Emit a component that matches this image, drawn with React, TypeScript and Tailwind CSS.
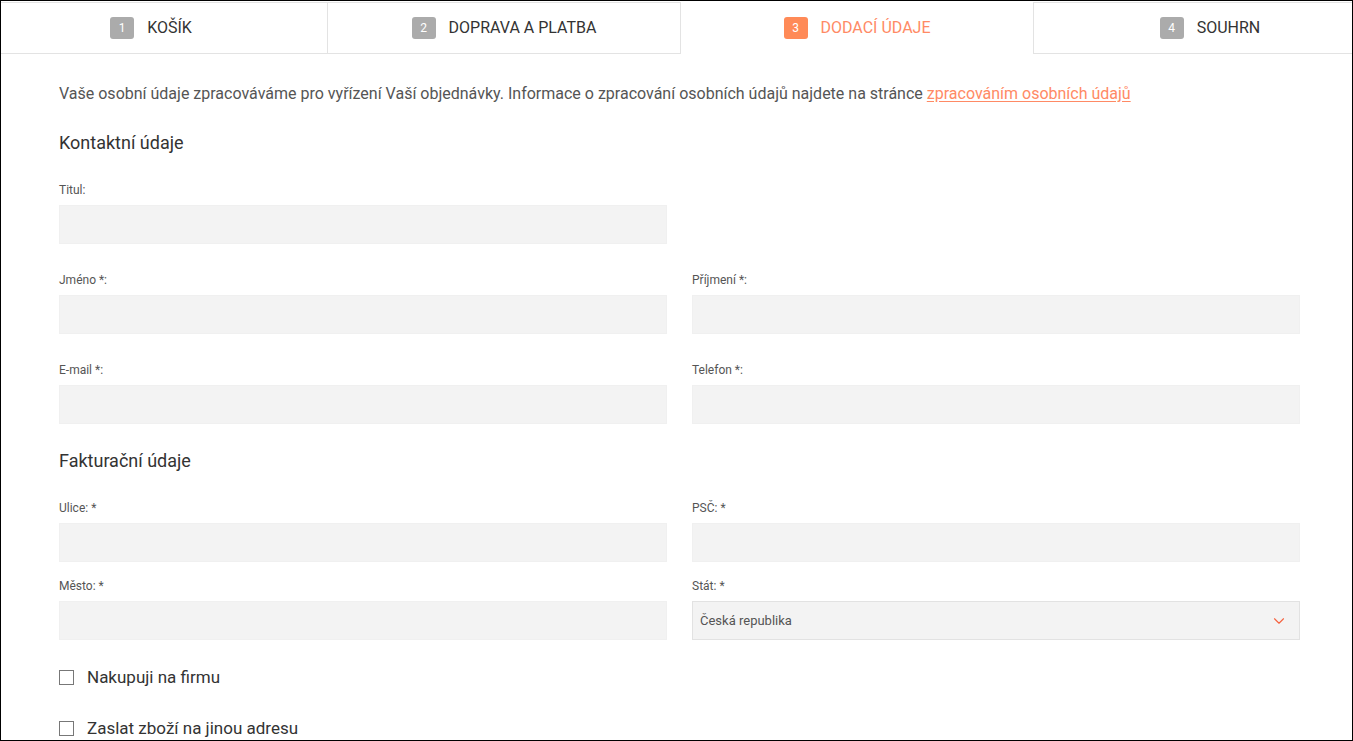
import { ChevronDown } from 'lucide-react';

const steps = [
  { n: 1, label: 'KOŠÍK' },
  { n: 2, label: 'DOPRAVA A PLATBA' },
  { n: 3, label: 'DODACÍ ÚDAJE', active: true },
  { n: 4, label: 'SOUHRN' },
];

function Field({ label, select }: { label: string; select?: boolean }) {
  return (
    <div className="flex flex-col">
      <label className="text-[12px] leading-[16px] text-[#555] mb-[7px]">{label}</label>
      {select ? (
        <div className="h-[39px] bg-[#f3f3f3] border border-[#e2e2e2] flex items-center justify-between pl-[7px] pr-[11px]">
          <span className="text-[13px] text-[#555]">Česká republika</span>
          <ChevronDown className="h-[18px] w-[18px] text-[#f5623f]" strokeWidth={1.5} />
        </div>
      ) : (
        <input className="h-[39px] bg-[#f3f3f3] border border-[#f0f0f0] outline-none px-2" />
      )}
    </div>
  );
}

function Checkbox({ label }: { label: string }) {
  return (
    <label className="flex items-center gap-[13px] text-[17px] leading-[22px] text-[#333]">
      <span className="w-[15px] h-[15px] border border-[#777] bg-white"></span>
      {label}
    </label>
  );
}

export default function App() {
  return (
    <div
      className="w-[1353px] h-[741px] border border-black overflow-hidden bg-white"
      style={{ fontFamily: 'Roboto, "Liberation Sans", sans-serif' }}
    >
      <div className="flex ml-[-26px] mt-[1px]">
        {steps.map((s) => (
          <div
            key={s.n}
            className={
              s.active
                ? 'w-[353px] shrink-0 h-[52px] flex items-center justify-center gap-[13px] border-r border-[#e3e3e3] bg-white'
                : 'w-[353px] shrink-0 h-[52px] flex items-center justify-center gap-[13px] border-t border-b border-r border-[#e3e3e3] bg-white'
            }
          >
            <span
              className={
                s.active
                  ? 'w-[24px] h-[22px] rounded-[3px] bg-[#ff8a57] text-white text-[12px] flex items-center justify-center'
                  : 'w-[24px] h-[22px] rounded-[3px] bg-[#ababab] text-white text-[12px] flex items-center justify-center'
              }
            >
              {s.n}
            </span>
            <span className={s.active ? 'text-[16px] text-[#ff8a65]' : 'text-[16px] text-[#333]'}>{s.label}</span>
          </div>
        ))}
      </div>

      <div className="pl-[58px] pr-[52px]">
        <p className="mt-[30px] text-[16px] leading-[20px] text-[#555]">
          Vaše osobní údaje zpracováváme pro vyřízení Vaší objednávky. Informace o zpracování osobních údajů najdete na
          stránce{' '}
          <a href="#" className="text-[#ff8a65] underline underline-offset-2">
            zpracováním osobních údajů
          </a>
        </p>

        <h2 className="mt-[28px] text-[18px] leading-[22px] text-[#333]">Kontaktní údaje</h2>

        <div className="mt-[28px] grid grid-cols-2 gap-x-[25px]">
          <Field label="Titul:" />
        </div>
        <div className="mt-[28px] grid grid-cols-2 gap-x-[25px]">
          <Field label="Jméno *:" />
          <Field label="Příjmení *:" />
        </div>
        <div className="mt-[28px] grid grid-cols-2 gap-x-[25px]">
          <Field label="E-mail *:" />
          <Field label="Telefon *:" />
        </div>

        <h2 className="mt-[26px] text-[18px] leading-[22px] text-[#333]">Fakturační údaje</h2>

        <div className="mt-[28px] grid grid-cols-2 gap-x-[25px]">
          <Field label="Ulice: *" />
          <Field label="PSČ: *" />
        </div>
        <div className="mt-[16px] grid grid-cols-2 gap-x-[25px]">
          <Field label="Město: *" />
          <Field label="Stát: *" select />
        </div>

        <div className="mt-[26px] flex flex-col gap-[29px]">
          <Checkbox label="Nakupuji na firmu" />
          <Checkbox label="Zaslat zboží na jinou adresu" />
        </div>
      </div>
    </div>
  );
}
